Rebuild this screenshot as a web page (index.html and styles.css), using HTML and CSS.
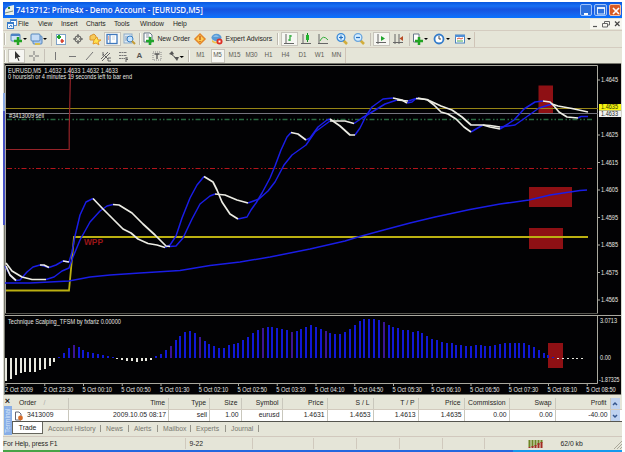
FILE: index.html
```html
<!DOCTYPE html>
<html lang="en">
<head>
<meta charset="utf-8">
<title>7413712: Prime4x - Demo Account</title>
<link rel="stylesheet" href="styles.css">
</head>
<body>
<div class="window">
  <header class="titlebar">
    <svg class="app-icon" width="11" height="12" viewBox="0 0 11 12"><path d="M1 11V6Q3 2 10 1V11Z" fill="#e9efe8"/><path d="M1 9L9 7" stroke="#7b8b83"/><path d="M5 3V5" stroke="#278a32" stroke-width="2"/></svg>
    <h1>7413712: Prime4x - Demo Account - [EURUSD,M5]</h1>
    <div class="win-buttons"><span><svg width="12" height="12"><path d="M3 9H7" stroke="#fff" stroke-width="2"/></svg></span><span><svg width="12" height="12"><rect x="2.5" y="3" width="7" height="6" fill="none" stroke="#dcecff"/><path d="M2 3H10" stroke="#fff" stroke-width="1.5"/></svg></span><span class="close"><svg width="12" height="12"><path d="M3 3L9 9M9 3L3 9" stroke="#fff" stroke-width="1.7"/></svg></span></div>
  </header>

  <nav class="menubar">
    <svg width="10" height="11" viewBox="0 0 10 11"><rect x="3.5" y=".5" width="6" height="6" fill="#fff" stroke="#5a91d6"/><rect x=".5" y="3.5" width="6" height="6" fill="#eef6ff" stroke="#397bc8"/><path d="M1 4.5H6M4 1.5H9" stroke="#397bc8"/><path d="M2 8L4 6L5 8" stroke="#397bc8" fill="none"/></svg>
    <span class="m-file">File</span><span class="m-view">View</span><span class="m-insert">Insert</span><span class="m-charts">Charts</span><span class="m-tools">Tools</span><span class="m-window">Window</span><span class="m-help">Help</span>
    <div class="mdi"><svg width="10" height="10"><path d="M3 7.5H7" stroke="#555" stroke-width="1.2"/></svg><svg width="10" height="10"><path d="M3.5 4V2.5H8.5V6H7M1.5 4.5H6.500V8H1.500Z" fill="none" stroke="#666"/></svg><svg width="10" height="10"><path d="M3 2.500L7.500 7M7.500 2.500L3 7" stroke="#444" stroke-width="1.2"/></svg></div>
  </nav>

  <div class="toolbar main-tools">
    <i class="grip"></i>
    <span class="tool drop"><svg width="18" height="14"><rect x="1" y="2" width="9" height="7" rx="1" fill="#cfe3f8" stroke="#5586bd"/><path d="M1 3H10" stroke="#4c82c4" stroke-width="2"/><path d="M8 5V13M4 9H12" stroke="#22a422" stroke-width="2.500"/><path d="M13 6H17L15 8Z"/></svg></span>
    <span class="tool drop second"><svg width="18" height="14"><rect x="3" y="4" width="9" height="8" rx="1" fill="#a9c8ee" stroke="#5586bd"/><rect x="1" y="2" width="9" height="7" rx="1" fill="#c6dcf6" stroke="#5586bd"/><path d="M5 12H10" stroke="#d4bd4f" stroke-width="2"/><path d="M13 6H17L15 8Z"/></svg></span>
    <i class="sep first-sep"></i>
    <span class="tool"><svg width="14" height="14"><rect x="2.500" y="2.500" width="9" height="10" fill="#fff" stroke="#7ea2c8"/><path d="M5 3V7M3 5H7" stroke="#20a52c" stroke-width="2"/><path d="M8 7V11M6.500 9H10" stroke="#d33b28" stroke-width="1.500"/></svg></span>
    <span class="tool"><svg width="14" height="14"><circle cx="7" cy="7" r="3.200" fill="none" stroke="#555"/><path d="M7 2V6M7 8V12M2 7H6M8 7H12" stroke="#555"/></svg></span>
    <span class="tool"><svg width="14" height="14"><path d="M2 4L6 2L8 4V8H2Z" fill="#f7c957" stroke="#d89430"/><path d="M6 8L9 5L10 8L13 8L10 10L11 13L8 11L5 12Z" fill="#ffe34e" stroke="#e49a28"/></svg></span>
    <span class="tool pressed"><svg width="14" height="14"><rect x="2" y="2.500" width="10" height="9" fill="#fff" stroke="#3f78bd" stroke-width="1.300"/><path d="M5 3V11" stroke="#3f78bd"/><path d="M7 5H10M7 7H10" stroke="#c9d6e4"/><path d="M3 5H4M3 7H4" stroke="#d56048"/></svg></span>
    <span class="tool"><svg width="14" height="14"><rect x="2" y="2" width="8" height="9" fill="#dceaf6" stroke="#8dabc8"/><path d="M4 4V9M6 4V9" stroke="#8e9dae"/><circle cx="8" cy="7" r="3" fill="#c7e4ff" stroke="#397fc3"/><path d="M10 9L13 12" stroke="#c49b35" stroke-width="2"/></svg></span>
    <i class="grip group"></i>
    <span class="tool"><svg width="14" height="14"><path d="M2 1H8L10 3V10H2Z" fill="#fff" stroke="#667788"/><path d="M4 3H7M4 5H8" stroke="#8d99a5"/><path d="M8 5V13M4 9H12" stroke="#20a52c" stroke-width="2.600"/></svg></span>
    <span class="label neworder">New Order</span>
    <span class="tool"><svg width="14" height="14"><path d="M7 2L12 7L7 12L2 7Z" fill="#ffcd55" stroke="#e3862a" stroke-width="1.500"/><path d="M7 4V8M7 9V10" stroke="#b74b18" stroke-width="1.200"/></svg></span>
    <span class="tool"><svg width="14" height="14"><path d="M2 8Q7 12 12 8V10Q7 13 2 10Z" fill="#f0c34b"/><ellipse cx="6.500" cy="5.500" rx="5" ry="3.700" fill="#5a9bd6"/><path d="M3 5Q6 1 9 5" fill="#88bde8"/><circle cx="9.500" cy="9.500" r="3" fill="#dc2e25"/><rect x="8.500" y="8.500" width="2" height="2" fill="#fff"/></svg></span>
    <span class="label expert">Expert Advisors</span>
    <i class="grip tight"></i>
    <span class="tool pressed"><svg width="14" height="14"><path d="M4 2V12M2 11.500H12" stroke="#666"/><path d="M8 3V9M8 4H10M6 8H8" stroke="#20a52c" stroke-width="1.200"/></svg></span>
    <span class="tool"><svg width="14" height="14"><path d="M4 2V12M2 11.500H12" stroke="#666"/><path d="M8.500 1V10" stroke="#168a22"/><rect x="7" y="3" width="3" height="5" fill="#20b52c"/></svg></span>
    <span class="tool"><svg width="14" height="14"><path d="M3 2V12M2 11.500H12" stroke="#666"/><path d="M4 9Q7 2 12 8" fill="none" stroke="#36ad3c"/></svg></span>
    <i class="space"></i>
    <span class="tool"><svg width="14" height="14"><path d="M8 8L12 12" stroke="#d2ad3b" stroke-width="2.500"/><circle cx="6" cy="5.500" r="3.900" fill="#d5edff" stroke="#3b8ad7" stroke-width="1.300"/><path d="M4 5.500H8M6 3.500V7.500" stroke="#246fc0" stroke-width="1.200"/></svg></span>
    <span class="tool"><svg width="14" height="14"><path d="M8 8L12 12" stroke="#d2ad3b" stroke-width="2.500"/><circle cx="6" cy="5.500" r="3.900" fill="#d5edff" stroke="#69a4dc" stroke-width="1.300"/><path d="M4 5.500H8" stroke="#246fc0" stroke-width="1.200"/></svg></span>
    <i class="sep"></i>
    <span class="tool pressed"><svg width="14" height="14"><path d="M4 2V12M2 10.500H12" stroke="#666"/><path d="M7 4L11 6.500L7 9Z" fill="#20a52c"/></svg></span>
    <span class="tool"><svg width="14" height="14"><path d="M4 2V12M8 2V12M2 10.500H12" stroke="#666"/><path d="M12 4L8.500 6.500L12 9Z" fill="#b84b25"/></svg></span>
    <i class="sep narrow"></i>
    <span class="tool drop"><svg width="18" height="14"><path d="M1.500 2H7V10H1.500Z" fill="#fff" stroke="#667788"/><path d="M7 5V13M3 9H11" stroke="#22a422" stroke-width="2.500"/><path d="M12 6H16L14 8Z"/></svg></span>
    <span class="tool drop"><svg width="18" height="14"><circle cx="6" cy="7" r="4.500" fill="#fff" stroke="#347cca" stroke-width="1.800"/><path d="M6 4V7H8" fill="none" stroke="#444"/><path d="M13 6H17L15 8Z"/></svg></span>
    <span class="tool drop"><svg width="18" height="14"><rect x="1.500" y="3" width="9" height="8" fill="#fff" stroke="#4b82bd"/><path d="M1 4H11" stroke="#4e8ed6" stroke-width="2"/><path d="M3 7L5 6L7 7L9 6" stroke="#d55038" fill="none"/><path d="M3 9H9" stroke="#48a74c"/><path d="M13 6H17L15 8Z"/></svg></span>
    <i class="bar-end"></i>
  </div>

  <div class="toolbar draw-tools">
    <i class="grip"></i>
    <span class="tool pressed"><svg width="14" height="14"><path d="M5 2V10L7 8.500L8.500 12L9.500 11.500L8 8H10.500Z" fill="#333"/></svg></span>
    <span class="tool"><svg width="14" height="14"><path d="M7 2V6M7 8V12M2 7H6M8 7H12" stroke="#777"/></svg></span>
    <i class="sep narrow"></i>
    <span class="tool"><svg width="14" height="14"><path d="M7.500 3V11" stroke="#777"/></svg></span>
    <span class="tool"><svg width="14" height="14"><path d="M4 7.500H11" stroke="#777"/></svg></span>
    <span class="tool"><svg width="14" height="14"><path d="M4 11L11 3" stroke="#777"/></svg></span>
    <span class="tool"><svg width="14" height="14"><path d="M2 10L9 3M3 12L11 4M4 5L9 10M4 3V7" stroke="#666"/><path d="M9 9H12M9 12H12M9 9V12" stroke="#666"/></svg></span>
    <span class="tool"><svg width="14" height="14"><path d="M3 3.500H11M3 6.500H11M3 9.500H9" stroke="#777" stroke-dasharray="2 .5"/><path d="M10 9H12M10 8V13M10 10.500H12" stroke="#666"/></svg></span>
    <span class="tool glyph">A</span>
    <span class="tool"><svg width="14" height="14"><rect x="3" y="3" width="8" height="8" fill="none" stroke="#888" stroke-dasharray="1 1"/><path d="M4.500 5H9.500M7 5V10" stroke="#555" stroke-width="1.300"/></svg></span>
    <span class="tool drop"><svg width="18" height="14"><path d="M2 5L5 2L7 5L5 6ZM7 8L12 8L10 12Z" fill="#555"/><path d="M4 5L9 9" stroke="#555"/><path d="M12.500 7H17L14.700 9Z"/></svg></span>
    <i class="grip periods"></i>
    <span class="period">M1</span><span class="period pressed">M5</span><span class="period">M15</span><span class="period">M30</span><span class="period">H1</span><span class="period">H4</span><span class="period">D1</span><span class="period">W1</span><span class="period">MN</span>
    <i class="bar-end"></i>
  </div>

  <main class="workspace">
    <svg class="chart" width="619" height="332" viewBox="3 63 619 332">
      <rect x="3" y="63" width="619" height="332" fill="#d6d6cc"/>
      <rect x="4" y="63" width="617" height="332" fill="#77776e"/>
      <rect x="5" y="64" width="616" height="330" fill="#020204"/>
      <rect x="3" y="93" width="3" height="132" fill="#4450c4"/><rect x="3" y="93" width="3" height="18" fill="#89a9e4"/>
      <path d="M5.500 313.500V65.500H597.500V313.500" fill="none" stroke="#aaa99f"/>
      <path d="M5 313.500H598" stroke="#55554f"/><path d="M5 315.500H621" stroke="#aaa99f"/>
      <path d="M5.500 383.500H597.500V316" fill="none" stroke="#aaa99f"/>
      <g fill="#8e1014"><rect x="538.500" y="85.500" width="14.500" height="28"/><rect x="529" y="187" width="43" height="20"/><rect x="529" y="228" width="34" height="21"/><rect x="548" y="343" width="15" height="25"/></g>
      <path d="M6 108.500H598" stroke="#978516" stroke-width="1.200"/><path d="M6 113.500H598" stroke="#74747e"/>
      <path d="M7 119.500H594" stroke="#2a6a40" stroke-width="1.300" stroke-dasharray="5 2.500 1.500 2 1.500 2"/>
      <path d="M7 168.500H594" stroke="#b3141b" stroke-width="1.100" stroke-dasharray="5 2.500 1.500 2 1.500 2"/>
      <path d="M6 149.500H69.200V130L70.300 80V67" fill="none" stroke="#962329" stroke-width="1.200"/>
      <path d="M6 290.500H69L74 237H588" fill="none" stroke="#bbb011" stroke-width="1.800"/>
      <g class="averages">
        <path class="up" d="M5 283H30L69 281L90 277L110 275L140 273L180 270.500L195 268L210 265.500L240 262L270 257L310 249L345 241L358 237L380 231L410 223L435 217L470 209.500L500 204L529 200L550 195L580 190.500L587 190"/>
        <path class="up" d="M5 266L10 275L16 280.500L20 280L27 272L33 267L40 265L49 267.500L56 265L63 261L69 262L72 252L75 236L80 215L86 202L93 198.500M165 247.500L170 245L176 236L182 218L190 198L197 185L204 176.500M238 219L247 217L251 210L256 203L262 193L270 178L275 166L281 150L287 137L291 132.500M306 140L310 138L318 127L327 120L330 119M355 135L360 128L366 116L372 107L383 99L393 98M407 103L412 102L416 98.500M471 132L476 129L483 125M500 129L508 124L514 120L524 109L535 102L543 101M578 118L581 116.500H588"/>
        <path class="up" d="M46 279.500L54 277L62 271L69 268L73 257L80 240L90 222L100 211L107 206L113 204.500M170 246.500L176 246L183 238L192 219L200 204L210 196L215 194M248 203L259 199L268 191L275 182L284 165L292 155L306 145L315 132L330 121M354 123.500L362 118L372 112L385 104L397 100M408 101L418 98M500 127L515 125L525 118L539 108L552 104"/>
        <path class="down" d="M6 266L10 275L16 280.500M40 265L44 265L49 267.500M63 261L69 262M93 198.500L103 209L112 218L123 229L131 233L138 239L148 243.500L157 245L165 247.500M204 176.500L213 182L217 190L222 202L230 214L238 219M291 132.500L298 134L306 140M330 119L340 126L350 135H355M393 98L402 100L407 103M416 98.500L427 99.500L434 105L441 112L448 114L456 119L464 127L471 132M483 125L490 127L500 129M543 101L550 102L554 106L559 112L567 117L578 118"/>
        <path class="down" d="M6 263L12 271L22 277L32 279.500H46M113 204.500L119 205L132 213L143 224L155 235L166 246L170 246.500M215 194L225 195L237 200L248 203M330 121H345L354 123.500M397 100L408 101M418 98L428 100L441 106L452 110L462 117L471 125H483L490 125.500L500 127M552 104L558 106L572 108.500L588 112"/>
      </g>
      <g id="histogram"></g>
      <g class="chart-text">
        <text x="8" y="72.700" textLength="110" lengthAdjust="spacingAndGlyphs">EURUSD,M5&#160; 1.4632 1.4633 1.4632 1.4633</text>
        <text x="8" y="79.300" textLength="124" lengthAdjust="spacingAndGlyphs">0 hoursish or 4 minutes 19 seconds left to bar end</text>
        <text x="9" y="117.500" textLength="35" lengthAdjust="spacingAndGlyphs">#3413009 sell</text>
        <text x="8" y="324" textLength="113" lengthAdjust="spacingAndGlyphs">Technique Scalping_TFSM by fxfariz 0.00000</text>
      </g>
      <text x="84" y="244.500" textLength="19" lengthAdjust="spacingAndGlyphs" class="pivot">WPP</text>
      <g id="axes" class="chart-text"></g>
    </svg>
  </main>

  <section class="terminal">
    <aside><b>×</b><span>Terminal</span></aside>
    <div class="panel">
      <div class="row head"><span class="first">Order <em>/</em></span><span>Time</span><span>Type</span><span>Size</span><span>Symbol</span><span>Price</span><span>S / L</span><span>T / P</span><span>Price</span><span>Commission</span><span>Swap</span><span>Profit</span><i><svg width="8" height="10"><path d="M2 6L4 4L6 6" fill="none" stroke="#35568d" stroke-width="1.500"/></svg></i></div>
      <div class="row data"><span class="first"><svg width="10" height="10"><path d="M1.500 1H5L7 3V9H1.500Z" fill="#fff" stroke="#667"/><circle cx="6.500" cy="7" r="2.400" fill="#d66a28"/></svg>3413009</span><span>2009.10.05 08:17</span><span>sell</span><span>1.00</span><span>eurusd</span><span>1.4631</span><span>1.4653</span><span>1.4613</span><span>1.4635</span><span>0.00</span><span>0.00</span><span>-40.00</span><i><svg width="8" height="10"><path d="M2 4L4 6L6 4" fill="none" stroke="#35568d" stroke-width="1.500"/></svg></i></div>
      <div class="tabs"><span class="active">Trade</span><span class="t-history">Account History</span><span class="t-news">News</span><span class="t-alerts">Alerts</span><span class="t-mail">Mailbox</span><span class="t-experts">Experts</span><span class="t-journal">Journal</span></div>
    </div>
  </section>

  <footer class="status">
    <span class="help">For Help, press F1</span><span class="profile">9-22</span><span></span><span></span><span></span><span></span><span></span>
    <span class="traffic"><svg width="15" height="8"><path d="M1.500 0V7M4.500 0V7M7.500 0V6M10.500 0V5M13.500 0V3" stroke="#6d8523" stroke-width="2"/><path d="M1.500 7V8M4.500 6V8M7.500 5V8M10.500 3V8M13.500 2V8" stroke="#a32c24" stroke-width="2"/></svg></span>
    <span class="rate">62/0 kb</span>
    <svg class="resize" width="9" height="11"><path d="M1 11L9 3M4 11L9 6M7 11L9 9" stroke="#aaa899"/></svg>
  </footer>
  <div class="taskbar"><i></i><b></b><em></em></div>
</div>
<script src="chart.js"></script>
</body>
</html>
```
FILE: styles.css
```css
* { box-sizing: border-box; }
body { margin: 0; background: #fff; font: 6.8px/1 "Liberation Sans", sans-serif; color: #25251f; overflow: hidden; }
svg { display: block; flex: none; }
i, em { font-style: normal; }
.window { width: 619px; height: 450px; margin: 2px 0 0 3px; display: flex; flex-direction: column; background: #e5e5d8; white-space: nowrap; }

.titlebar { height: 16px; flex: none; display: flex; align-items: center; padding: 0 1px 0 1px; background: linear-gradient(#0756df, #176ff4 25%, #1553df 45%, #1664ed 75%, #0873ff); }
.app-icon { margin-right: 1px; }
.titlebar h1 { margin: 0; color: #f3f7ff; font: 600 8px/14px "Open Sans", sans-serif; letter-spacing: -.055px; }
.win-buttons { margin-left: auto; display: flex; gap: 2px; }
.win-buttons span { width: 12.500px; height: 12px; border: .5px solid #9fc2fa; border-radius: 2px; background: #2d70dc; display: grid; place-items: center; }
.win-buttons .close { background: #d85b24; border-color: #f1c4aa; }

.menubar { height: 12px; flex: none; display: flex; align-items: center; padding-left: 4px; }
.menubar span { letter-spacing: -.05px; }
.menubar .m-file { width: 20px; margin-left: 1px; }
.menubar .m-view { width: 23px; }
.menubar .m-insert { width: 25px; }
.menubar .m-charts { width: 28px; }
.menubar .m-tools { width: 26px; }
.menubar .m-window { width: 33px; }
.mdi { margin-left: auto; display: flex; gap: 1px; background: #f6f6f0; }

.toolbar { display: flex; align-items: center; flex: none; border-top: 1px solid #d4ccc0; }
.main-tools { height: 17px; }
.draw-tools { height: 16px; }
.toolbar > * { flex: none; }
.tool { width: 17px; height: 14px; display: flex; justify-content: center; align-items: center; }
.drop { width: 21px; }
.drop.second { width: 20px; }
.pressed { background: #f6f6f2; border: 1px solid #c7c5bc; }
.pressed svg { margin: -1px; }
.grip { width: 2px; height: 12px; border-left: 1px solid #bdb9af; border-right: 1px solid #fbfbf7; margin: 0 2px 0 1px; }
.grip.group { margin: 0 0 0 1px; }
.grip.tight { margin: 0 2px; }
.sep { width: 1px; height: 13px; background: #c6c1b7; margin: 0 2px; }
.sep.first-sep { margin: 0 1px 0 1.500px; }
.sep.narrow { margin: 0 1px 0 2px; }
.space { width: 2px; }
.bar-end { width: 1px; height: 15px; background: #cfc4b7; }
.label { letter-spacing: -.04px; }
.label.neworder { width: 34px; }
.label.expert { width: 49px; }
.glyph { color: #555; font-size: 8px; font-weight: bold; }
.grip.periods { margin: 0 2px; }
.period { width: 17px; height: 14px; display: flex; align-items: center; justify-content: center; color: #5d5c55; font-size: 6.300px; }
.period.pressed { width: 14px; margin: 0 1.500px; }

.workspace { height: 332px; flex: none; }
.chart-text { font: 6.300px "Liberation Sans", sans-serif; fill: #e6e6e2; }
.pivot { font: bold 8.500px "Liberation Sans", sans-serif; fill: #9b1518; }
.averages path { fill: none; stroke-linejoin: round; }
.averages .up { stroke: #1a1de6; stroke-width: 1.500; }
.averages .down { stroke: #ecece4; stroke-width: 1.700; }
#histogram { shape-rendering: crispEdges; }

.terminal { height: 40px; margin-top: 1px; display: flex; flex: none; }
.terminal aside { width: 9px; display: flex; flex-direction: column; align-items: center; }
.terminal aside b { height: 10px; font-size: 9px; line-height: 10px; }
.terminal aside span { width: 8px; height: 29px; background: #88aee6; color: #d7e6fb; writing-mode: vertical-rl; transform: rotate(180deg); text-align: center; font-size: 6.500px; line-height: 8px; }
.panel { flex: 1; padding-top: 2px; }
.row { display: grid; grid-template-columns: 57px 100px 41px 31.500px 41px 45px 46px 45px 46px 45px 46px 55px 9px; }
.row span { display: flex; align-items: center; justify-content: flex-end; padding-right: 2px; border-right: 1px solid #c9c7bc; }
.row .first { justify-content: flex-start; padding-left: 2px; }
.head { height: 12px; border-bottom: 1px solid #d2cabe; }
.head .first { padding-left: 7px; }
.head em { color: #aaa; margin-left: 7px; }
.head span { padding-right: 3px; }
.data { height: 12px; background: #fff; border-bottom: 1px solid #55554f; }
.data .first svg { margin-right: 3px; }
.row i { background: #bfd3f0; display: grid; place-items: center; }
.tabs { height: 13px; display: flex; align-items: center; color: #77776f; }
.tabs span { border-right: 1px solid #96958b; height: 7px; line-height: 7px; }
.tabs .active { width: 31px; height: 12px; line-height: 11px; text-align: center; color: #222; background: #fff; border: 1px solid #66665d; border-top: 0; align-self: flex-start; margin-right: 5px; }
.t-history { width: 53px; }
.tabs .t-news, .tabs .t-alerts, .tabs .t-mail, .tabs .t-experts, .tabs .t-journal { padding-left: 5px; }
.tabs .t-news { width: 28px; }
.tabs .t-alerts { width: 29px; }
.tabs .t-mail { width: 33px; }
.tabs .t-experts { width: 35px; }
.tabs .t-journal { width: 33px; }

.status { height: 14px; flex: none; display: grid; grid-template-columns: 182.500px 67px 61px 43px 43px 43px 42px 38px 1fr 9px; border-top: 1px solid #d1c8bd; align-items: center; font-size: 6.800px; }
.status span { height: 11px; line-height: 11px; border-right: 1px solid #d0c9bd; }
.status .help { letter-spacing: -.1px; }
.status .profile { padding-left: 4px; }
.status .traffic { border: 0; display: flex; align-items: center; padding-left: 43px; }
.status .rate { border: 0; padding-left: 38px; }
.taskbar { height: 3px; display: flex; margin-top: auto; }
.taskbar i { width: 57px; background: #47a347; }
.taskbar b { flex: 1; background: #2467df; }
.taskbar em { width: 109px; background: #1599ed; }
```
FILE: chart.js
```javascript
const ns = 'http://www.w3.org/2000/svg';
const add = (parent, tag, attrs, text) => {
  const node = document.createElementNS(ns, tag);
  for (const key in attrs) node.setAttribute(key, attrs[key]);
  if (text) node.textContent = text;
  parent.appendChild(node);
};

// Momentum values in thirds of a pixel around the zero line.
const values = [-70,-64,-52,-47,-44,-44,-42,-38,-34,-25,-14,1,14,28,37,31,23,18,14,10,7,5,3,-4,-7,-11,-11,-13,-11,-10,-6,4,11,23,36,52,64,76,79,73,61,50,40,34,28,28,37,40,43,52,61,73,82,88,91,91,88,85,82,77,79,85,91,97,91,85,79,73,70,70,76,85,98,110,115,116,116,112,106,98,91,88,83,82,77,79,73,64,56,52,46,43,43,37,37,34,34,37,37,34,34,37,40,43,43,43,43,43,37,31,23,14,7,1,-5,-5,-5,-5,-5,-5];
const zero = 357.5;
const histogram = document.getElementById('histogram');
values.forEach((value, i) => {
  const height = Math.max(1, Math.abs(value) / 3);
  add(histogram, 'rect', {
    x: Math.round(5 + i * 4.843), y: value > 0 ? zero - height : zero,
    width: 2, height,
    fill: value < 0 ? '#e8e8df' : [14, 34, 40, 53, 59, 66, 78].includes(i) ? '#3b1594' : '#1118d5'
  });
});

const axes = document.getElementById('axes');
const label = (x, y, width, text, style = '') =>
  add(axes, 'text', { x, y, textLength: width, lengthAdjust: 'spacingAndGlyphs', style }, text);
const prices = [1.4645, null, 1.4625, 1.4615, 1.4605, 1.4595, 1.4585, 1.4575, 1.4565];
prices.forEach((price, i) => {
  if (!price) return;
  const y = 80 + i * 27.5;
  add(axes, 'path', { d: `M598 ${y}h2`, stroke: '#aaa99f' });
  label(601, y + 2.3, 17, price.toFixed(4));
});
add(axes, 'rect', { x: 599, y: 104, width: 22, height: 6.5, fill: '#f7f511' });
label(601, 109.4, 17, '1.4635', 'fill:#333800');
add(axes, 'rect', { x: 599, y: 110.5, width: 22, height: 6.5, fill: '#f0f0f0' });
label(601, 116.1, 17, '1.4633', 'fill:#222');
label(600, 322.5, 17, '3.0713');
label(600, 359.5, 11, '0.00');
label(599, 382, 20.5, '-1.87325');
const times = ['2 Oct 2009','2 Oct 23:30','5 Oct 00:10','5 Oct 00:50','5 Oct 01:30','5 Oct 02:10','5 Oct 02:50','5 Oct 03:30','5 Oct 04:10','5 Oct 04:50','5 Oct 05:30','5 Oct 06:10','5 Oct 06:50','5 Oct 07:30','5 Oct 08:10','5 Oct 08:50'];
times.forEach((time, i) => {
  const x = 6 + i * 38.75;
  add(axes, 'path', { d: `M${x} 383v3`, stroke: '#aaa99f' });
  label(x - 1, 391.5, i ? 29.5 : 28, time);
});
```
